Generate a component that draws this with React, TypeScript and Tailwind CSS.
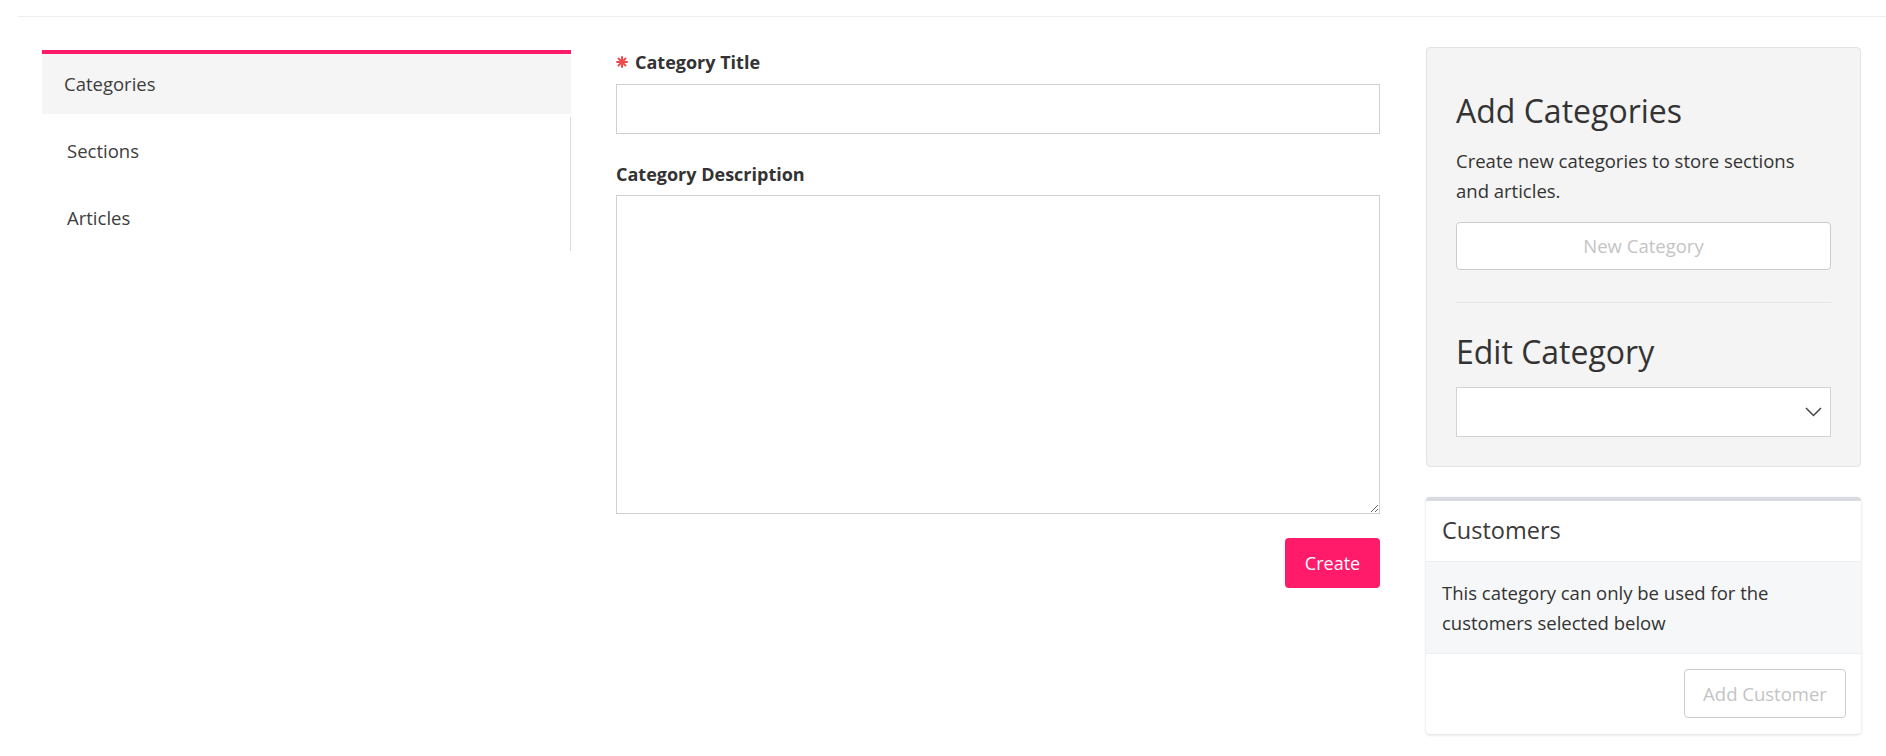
import { useState } from "react";

const navItems = ["Categories", "Sections", "Articles"];

const Asterisk = () => (
  <svg width="12" height="12" viewBox="0 0 12 12" className="shrink-0">
    <g stroke="#ee4b4f" strokeWidth="2" strokeLinecap="round">
      <line x1="6" y1="1" x2="6" y2="11" />
      <line x1="1" y1="6" x2="11" y2="6" />
      <line x1="2.5" y1="2.5" x2="9.5" y2="9.5" />
      <line x1="9.5" y1="2.5" x2="2.5" y2="9.5" />
    </g>
  </svg>
);

const Chevron = () => (
  <svg width="17" height="10" viewBox="0 0 17 10" fill="none">
    <polyline points="1,1 8.5,8.5 16,1" stroke="#444" strokeWidth="1.5" />
  </svg>
);

function SideNav() {
  const [active, setActive] = useState(0);
  return (
    <nav className="w-[529px] mt-[3px] flex flex-col">
      {navItems.map((item, i) =>
        i === active ? (
          <button
            key={item}
            onClick={() => setActive(i)}
            className="h-[64px] border-t-4 border-[#ff1a6a] bg-[#f5f5f5] pl-[22px] text-left text-[18.5px] text-[#3d3d3d]"
          >
            {item}
          </button>
        ) : (
          <button
            key={item}
            onClick={() => setActive(i)}
            className={
              "h-[67px] border-r border-[#dddddd] pl-[25px] text-left text-[18.5px] text-[#3d3d3d] " +
              (i === 1 ? "mt-[3px]" : "")
            }
          >
            {item}
          </button>
        )
      )}
    </nav>
  );
}

function CategoryForm() {
  return (
    <form className="w-[764px] mt-[3px] flex flex-col" onSubmit={(e) => e.preventDefault()}>
      <label className="flex items-center gap-[7px] h-[24px] text-[18px] font-bold text-[#333]">
        <Asterisk />
        Category Title
      </label>
      <input
        type="text"
        className="mt-[10px] h-[50px] border border-[#d0d0d0] px-3 text-[18px] outline-none"
      />
      <label className="mt-[28px] h-[24px] flex items-center text-[18px] font-bold text-[#333]">
        Category Description
      </label>
      <textarea className="mt-[9px] h-[319px] border border-[#d0d0d0] p-3 text-[18px] outline-none" />
      <div className="flex justify-end mt-[24px]">
        <button className="h-[50px] w-[95px] rounded-[4px] bg-[#ff1a6a] text-[18px] text-white">
          Create
        </button>
      </div>
    </form>
  );
}

function CategoryPanel() {
  return (
    <div className="rounded-[4px] border border-[#e3e3e3] bg-[#f4f4f4] px-[29px] pt-[44px] pb-[29px]">
      <h2 className="text-[32px] leading-[38px] text-[#333]">Add Categories</h2>
      <p className="mt-[16px] max-w-[365px] text-[18.5px] leading-[30px] text-[#333]">
        Create new categories to store sections and articles.
      </p>
      <button className="mt-[16px] h-[48px] w-full rounded-[4px] border border-[#cccccc] bg-white text-[18.5px] text-[#c4c4c4]">
        New Category
      </button>
      <hr className="mt-[32px] border-t border-[#e6e6e6]" />
      <h2 className="mt-[30px] text-[32px] leading-[38px] text-[#333]">Edit Category</h2>
      <div className="mt-[16px] h-[50px] border border-[#d4d4d4] bg-white flex items-center justify-end pr-[8px]">
        <Chevron />
      </div>
    </div>
  );
}

function CustomersCard() {
  return (
    <div className="mt-[30px] rounded-[4px] border-t-4 border-[#d8dbe0] bg-white shadow-[0_1px_3px_rgba(0,0,0,0.15)]">
      <div className="h-[61px] flex items-center px-4 border-b border-[#eeeeee] text-[23.5px] text-[#3a3a3a]">
        Customers
      </div>
      <div className="bg-[#f6f7f8] px-4 pt-[16px] pb-[15px] text-[18.5px] leading-[30px] text-[#333] border-b border-[#eeeeee]">
        This category can only be used for the customers selected below
      </div>
      <div className="flex justify-end px-[15px] pt-[15px] pb-[16px]">
        <button className="h-[49px] w-[162px] rounded-[4px] border border-[#cccccc] bg-white text-[18.5px] text-[#c4c4c4]">
          Add Customer
        </button>
      </div>
    </div>
  );
}

export default function App() {
  return (
    <main className="min-h-screen bg-white font-[family-name:'Open_Sans',sans-serif] text-[#333]">
      <div className="pl-[18px]">
        <div className="h-[17px] border-b border-[#eeeeee]" />
      </div>
      <div className="flex items-start pl-[42px] pt-[30px] gap-[45px]">
        <SideNav />
        <CategoryForm />
        <div className="ml-[1px] w-[435px] flex flex-col">
          <CategoryPanel />
          <CustomersCard />
        </div>
      </div>
    </main>
  );
}
